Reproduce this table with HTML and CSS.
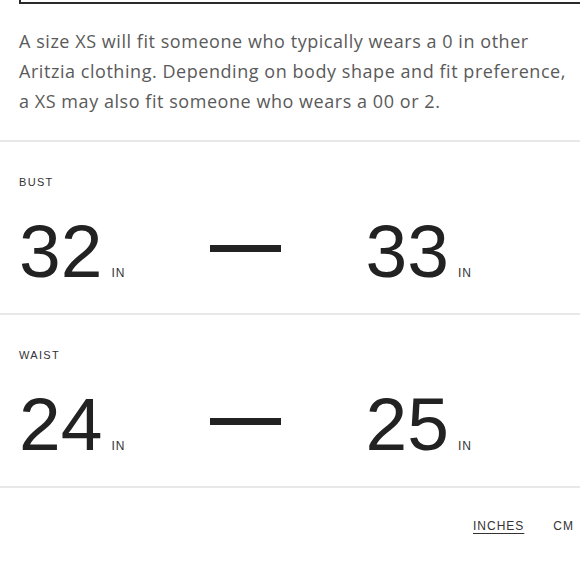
FILE: index.html
```html
<!DOCTYPE html>
<html>
<head>
<meta charset="utf-8">
<link rel="stylesheet" href="styles.css">
</head>
<body>
<div class="frame"></div>
<p class="desc">A size XS will fit someone who typically wears a 0 in other<br>Aritzia clothing. Depending on body shape and fit preference,<br>a XS may also fit someone who wears a 00 or 2.</p>
<section class="measure">
  <div class="label">BUST</div>
  <div class="range">
    <div class="value"><span class="num">32</span><span class="unit">IN</span></div>
    <div class="dash"></div>
    <div class="value"><span class="num">33</span><span class="unit">IN</span></div>
  </div>
</section>
<section class="measure">
  <div class="label">WAIST</div>
  <div class="range">
    <div class="value"><span class="num">24</span><span class="unit">IN</span></div>
    <div class="dash"></div>
    <div class="value"><span class="num">25</span><span class="unit">IN</span></div>
  </div>
</section>
<footer class="units">
  <span class="unit-opt active">INCHES</span>
  <span class="unit-opt">CM</span>
</footer>
</body>
</html>
```

FILE: styles.css
```css
html, body {
  margin: 0;
  padding: 0;
  background: #fff;
}
body {
  width: 580px;
  height: 580px;
  overflow: hidden;
  font-family: "Liberation Sans", Arial, sans-serif;
  color: #222;
}
.frame {
  margin-left: 19px;
  height: 2px;
  border-left: 2px solid #2a2a2a;
  border-bottom: 2px solid #2a2a2a;
}
.desc {
  margin: 22px 0 24px;
  padding: 0 0 0 19px;
  font-family: "Open Sans", sans-serif;
  font-size: 18px;
  line-height: 30px;
  letter-spacing: 0.55px;
  white-space: nowrap;
  color: #5a5a5a;
}
.measure {
  border-top: 2px solid #e8e8e8;
  padding: 35px 0 25px 19px;
}
.label {
  font-size: 11px;
  line-height: 11px;
  letter-spacing: 1.3px;
  color: #333;
}
.range {
  margin-top: 26px;
  width: 453px;
  display: flex;
  justify-content: space-between;
  align-items: center;
}
.value {
  display: flex;
  align-items: baseline;
}
.num {
  font-size: 75px;
  line-height: 74px;
  color: #222;
}
.unit {
  margin-left: 9px;
  font-size: 12px;
  letter-spacing: 1px;
  color: #333;
}
.dash {
  width: 71px;
  height: 7px;
  background: #222;
  margin-bottom: 6px;
}
.units {
  border-top: 2px solid #e8e8e8;
  display: flex;
  justify-content: flex-end;
  gap: 29px;
  padding: 33px 6px 0 0;
  font-size: 12px;
  line-height: 11px;
  letter-spacing: 1px;
  color: #333;
}
.unit-opt.active {
  text-decoration: underline;
  text-underline-offset: 3px;
  text-decoration-thickness: 1px;
}
```
